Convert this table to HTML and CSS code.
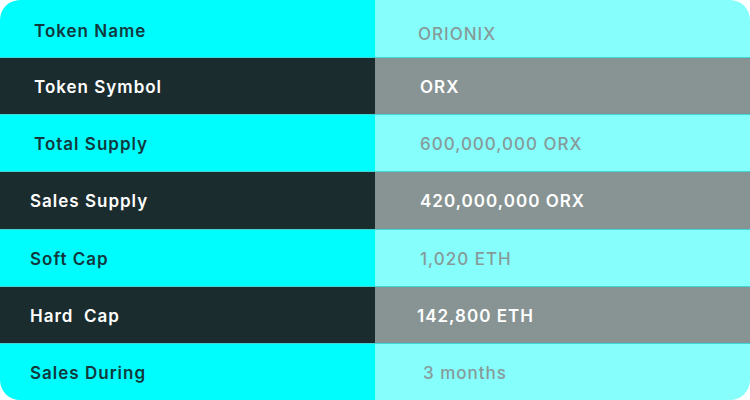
FILE: index.html
```html
<!DOCTYPE html>
<html>
<head>
<meta charset="utf-8">
<link rel="stylesheet" href="styles.css">
</head>
<body>
<div class="token-table">
  <div class="row light"><div class="key">Token Name</div><div class="val">ORIONIX</div></div>
  <div class="row dark"><div class="key">Token Symbol</div><div class="val">ORX</div></div>
  <div class="row light"><div class="key">Total Supply</div><div class="val">600,000,000 ORX</div></div>
  <div class="row dark"><div class="key">Sales Supply</div><div class="val">420,000,000 ORX</div></div>
  <div class="row light"><div class="key">Soft Cap</div><div class="val">1,020 ETH</div></div>
  <div class="row dark"><div class="key">Hard&nbsp; Cap</div><div class="val">142,800 ETH</div></div>
  <div class="row light"><div class="key">Sales During</div><div class="val">3 months</div></div>
</div>
</body>
</html>
```
FILE: styles.css
```css
html, body {
  margin: 0;
  padding: 0;
  background: #ffffff;
}
body {
  width: 750px;
  height: 400px;
  font-family: Inter, "Open Sans", sans-serif;
}
.token-table {
  width: 750px;
  height: 400px;
  display: grid;
  grid-template-rows: repeat(7, 1fr);
  border-radius: 20px;
  overflow: hidden;
}
.row {
  display: grid;
  grid-template-columns: 375px 375px;
}
.row + .row {
  border-top: 1px solid #3fd6d6;
}
.key, .val {
  display: flex;
  align-items: center;
  font-size: 17px;
  letter-spacing: 1px;
  padding-top: 2px;
}
.key {
  font-weight: 600;
  padding-left: 30px;
}
.val {
  font-weight: 500;
  padding-left: 45px;
}
.row:nth-child(-n+3) .key { padding-left: 34px; }
.row:nth-child(1) .key { padding-top: 4px; }
.row:nth-child(1) .val { padding-top: 10px; padding-left: 43px; }
.row:nth-child(6) .val { padding-left: 42px; }
.row:nth-child(7) .val { padding-left: 48px; }
.light .key { background: #00fdfe; color: #11393d; }
.light .val { background: #86fffc; color: #869a9a; }
.dark .key { background: #1b2c2e; color: #ffffff; }
.dark .val { background: #889494; color: #ffffff; font-weight: 600; }
```
